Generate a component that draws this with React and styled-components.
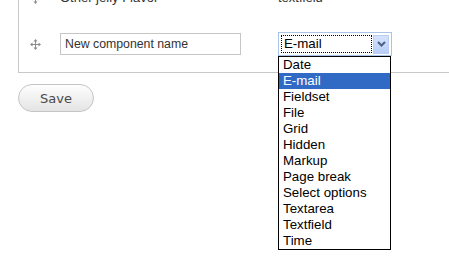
import React from 'react';
import styled, { createGlobalStyle } from 'styled-components';

const Global = createGlobalStyle`
    html, body {
        margin: 0;
        padding: 0;
        background: #fff;
        overflow: hidden;
    }
    body {
        font-family: "Liberation Sans", Arial, sans-serif;
        font-size: 13px;
        color: #222;
    }
`;

const Page = styled.div`
    position: relative;
    display: flow-root;
    width: 449px;
    height: 269px;
    overflow: hidden;
`;

const Panel = styled.div`
    margin: -10px 0 0 18px;
    width: 480px;
    border: 1px solid #c8c8c8;
    border-top: none;
    padding-bottom: 16px;
`;

const Row = styled.div`
    display: grid;
    grid-template-columns: 41px 218px 1fr;
    align-items: center;
    height: ${p => p.$h}px;
    margin-top: ${p => p.$top || 0}px;
`;

const Handle = styled.div`
    display: flex;
    padding-left: 11px;
`;

const Cell = styled.div`
    line-height: 16px;
    color: #333;
`;

const NameInput = styled.div`
    width: 181px;
    height: 22px;
    box-sizing: border-box;
    border: 1px solid #c6c6c6;
    padding: 0 4px;
    font-size: 12.3px;
    line-height: 20px;
    color: #333;
`;

const Combo = styled.div`
    width: 114px;
    height: 24px;
    box-sizing: border-box;
    border: 1px solid #a9c4e6;
    background: #fff;
    display: flex;
    align-items: center;
    padding: 2px;
    gap: 1px;
`;

const Focus = styled.div`
    flex: 1;
    height: 18px;
    box-sizing: border-box;
    border: 1px dotted #000;
    padding-left: 2px;
    font-size: 13.3px;
    line-height: 16px;
    color: #000;
`;

const DropBtn = styled.div`
    width: 16px;
    height: 19px;
    box-sizing: border-box;
    border: 1px solid #b9cdf7;
    background: linear-gradient(#d6e3fd, #b8cdf7);
    display: flex;
    align-items: center;
    justify-content: center;
`;

const List = styled.div`
    position: absolute;
    left: 278px;
    top: 56px;
    width: 113px;
    box-sizing: border-box;
    border: 1px solid #000;
    background: #fff;
`;

const Item = styled.div`
    height: 16px;
    line-height: 16px;
    padding-left: 4px;
    font-size: 13.3px;
    color: ${p => (p.$active ? '#fff' : '#000')};
    background: ${p => (p.$active ? '#316ac5' : 'transparent')};
`;

const SaveBtn = styled.button`
    margin: 11px 0 0 18px;
    width: 76px;
    height: 28px;
    border-radius: 14px;
    border: 1px solid #c4c4c4;
    background: linear-gradient(#fefefe, #e4e4e4);
    color: #4a4a4a;
    font-family: "DejaVu Sans", Verdana, sans-serif;
    font-size: 13px;
    padding: 0;
`;

const DragIcon = () => (
    <svg width="11" height="11" viewBox="0 0 11 11">
        <g fill="#8a8a8a">
            <rect x="5" y="1" width="1" height="9" />
            <rect x="1" y="5" width="9" height="1" />
            <polygon points="5.5,0 3.5,2.5 7.5,2.5" />
            <polygon points="5.5,11 3.5,8.5 7.5,8.5" />
            <polygon points="0,5.5 2.5,3.5 2.5,7.5" />
            <polygon points="11,5.5 8.5,3.5 8.5,7.5" />
        </g>
    </svg>
);

const Chevron = () => (
    <svg width="9" height="6" viewBox="0 0 9 6">
        <path d="M1 1 L4.5 4.5 L8 1" fill="none" stroke="#4d6185" strokeWidth="2" />
    </svg>
);

const types = [
    'Date', 'E-mail', 'Fieldset', 'File', 'Grid', 'Hidden', 'Markup',
    'Page break', 'Select options', 'Textarea', 'Textfield', 'Time',
];

const App = () => {
    return (
        <Page>
            <Global />
            <Panel>
                <Row $h={16}>
                    <Handle><DragIcon /></Handle>
                    <Cell>Other jelly Flavor</Cell>
                    <Cell>textfield</Cell>
                </Row>
                <Row $h={24} $top={26}>
                    <Handle><DragIcon /></Handle>
                    <div><NameInput>New component name</NameInput></div>
                    <div>
                        <Combo>
                            <Focus>E-mail</Focus>
                            <DropBtn><Chevron /></DropBtn>
                        </Combo>
                    </div>
                </Row>
            </Panel>
            <SaveBtn>Save</SaveBtn>
            <List>
                {types.map(t => (
                    <Item key={t} $active={t === 'E-mail'}>{t}</Item>
                ))}
            </List>
        </Page>
    );
};

export default App;
